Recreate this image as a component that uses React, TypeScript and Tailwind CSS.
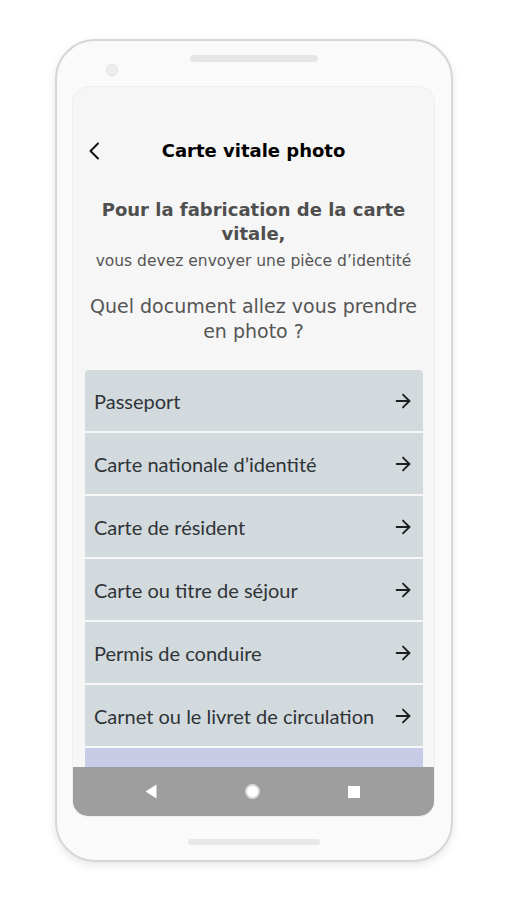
import { ArrowRight } from 'lucide-react';

const documents = [
  'Passeport',
  "Carte nationale d\u2019identit\u00e9",
  'Carte de r\u00e9sident',
  'Carte ou titre de s\u00e9jour',
  'Permis de conduire',
  'Carnet ou le livret de circulation',
];

function DocumentRow({ label, first }: { label: string; first?: boolean }) {
  return (
    <div
      className={`flex h-[61px] shrink-0 items-center justify-between bg-[#d3dadd] pl-[9px] pr-[9px] ${
        first ? 'rounded-t-[4px]' : ''
      }`}
    >
      <span className="pt-[1px] text-[20px] text-[#2f3438]" style={{ fontFamily: 'Lato, sans-serif' }}>
        {label}
      </span>
      <ArrowRight className="h-[22px] w-[22px] text-[#1e1e1e]" strokeWidth={2} />
    </div>
  );
}

export default function App() {
  return (
    <div className="min-h-[900px] w-full bg-white pl-[55px] pt-[39px]">
      {/* phone frame */}
      <div className="relative flex h-[823px] w-[398px] flex-col rounded-[40px] border-2 border-[#d6d6d6] bg-[#fafafa] shadow-[0_3px_8px_rgba(0,0,0,0.1)]">
        <div className="relative h-[45px] shrink-0">
          <div className="mx-auto mt-[14px] h-[7px] w-[128px] rounded-full bg-[#e6e6e6]" />
          <div className="absolute left-[49px] top-[23px] h-[12px] w-[12px] rounded-full border border-[#e2e2e2] bg-[#ededed]" />
        </div>

        {/* screen */}
        <div className="ml-[15px] flex h-[731px] w-[363px] flex-col overflow-hidden rounded-[16px] border border-[#efefef] bg-[#f6f6f6]">
          <div className="flex min-h-0 flex-1 flex-col overflow-hidden">
            <div className="mt-[52px] grid grid-cols-[44px_1fr_44px] items-center">
              <div className="pl-[15px]">
                <svg width="12" height="18" viewBox="0 0 12 18" fill="none">
                  <path d="M10 1.5 2.5 9 10 16.5" stroke="#111" strokeWidth="2" strokeLinecap="round" strokeLinejoin="round" />
                </svg>
              </div>
              <h1
                className="text-center text-[18px] font-bold leading-[24px] text-black"
                style={{ fontFamily: '"DejaVu Sans", sans-serif' }}
              >
                Carte vitale photo
              </h1>
              <div />
            </div>

            <div className="mt-[35px] text-center text-[#4f4f4f]" style={{ fontFamily: '"DejaVu Sans", sans-serif' }}>
              <p className="text-[18px] font-bold leading-[24px]">
                Pour la fabrication de la carte
                <br />
                vitale,
              </p>
              <p className="mt-[5px] text-[15.5px] leading-[20px] text-[#555]">
                vous devez envoyer une pi&egrave;ce d&rsquo;identit&eacute;
              </p>
              <p className="mt-[23px] text-[19px] leading-[25px] text-[#555]">
                Quel document allez vous prendre
                <br />
                en photo ?
              </p>
            </div>

            <div className="ml-[12px] mr-[11px] mt-[26px] flex flex-col gap-[2px]">
              {documents.map((d, i) => (
                <DocumentRow key={d} label={d} first={i === 0} />
              ))}
              <div className="h-[61px] shrink-0 bg-[#c8cbe6]" />
            </div>
          </div>

          {/* android nav bar */}
          <div className="flex h-[49px] shrink-0 items-center justify-center gap-[88px] bg-[#9e9e9e] pr-[2px]">
            <svg width="12" height="15" viewBox="0 0 12 15">
              <path d="M11.5 0.5v14L0.5 7.5z" fill="#fff" />
            </svg>
            <div className="h-[15px] w-[15px] rounded-full border-2 border-[#d9d9d9] bg-white" />
            <div className="h-[12px] w-[12px] bg-white" />
          </div>
        </div>

        <div className="mx-auto mt-[22px] h-[6px] w-[132px] rounded-full bg-[#e8e8e8]" />
      </div>
    </div>
  );
}
